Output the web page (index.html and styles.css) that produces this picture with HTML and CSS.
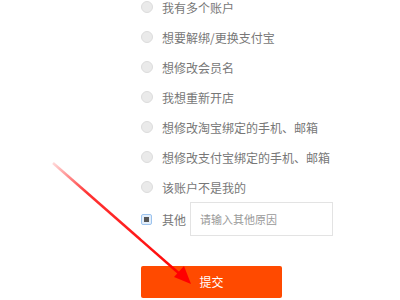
FILE: index.html
```html
<!DOCTYPE html>
<html lang="zh-CN">
<head>
	<meta charset="UTF-8">
	<title>申诉原因</title>
	<link rel="stylesheet" href="styles.css">
</head>
<body>
	<div class="reason">
		<ul class="reason-list">
			<li><span class="radio"></span>我有多个账户</li>
			<li><span class="radio"></span>想要解绑/更换支付宝</li>
			<li><span class="radio"></span>想修改会员名</li>
			<li><span class="radio"></span>我想重新开店</li>
			<li><span class="radio"></span>想修改淘宝绑定的手机、邮箱</li>
			<li><span class="radio"></span>想修改支付宝绑定的手机、邮箱</li>
			<li><span class="radio"></span>该账户不是我的</li>
			<li class="other"><span class="check"></span>其他<input class="other-input" type="text" placeholder="请输入其他原因"></li>
		</ul>
		<a href="#" class="submit">提交</a>
	</div>
	<svg class="arrow" width="400" height="300" viewBox="0 0 400 300">
		<defs>
			<linearGradient id="fade" x1="53" y1="163" x2="190" y2="283" gradientUnits="userSpaceOnUse">
				<stop offset="0" stop-color="#ff0000" stop-opacity="0.15"/>
				<stop offset="0.25" stop-color="#ff0000" stop-opacity="0.8"/>
				<stop offset="1" stop-color="#ff0000"/>
			</linearGradient>
		</defs>
		<line x1="53" y1="163" x2="182" y2="276" stroke="url(#fade)" stroke-width="2.5"/>
		<polygon points="191,284 174,277 184,266" fill="#ff0000"/>
	</svg>
</body>
</html>
```

FILE: styles.css
```css
*{
	margin:0;
	padding:0;
}
body{
	width:400px;
	height:300px;
	overflow:hidden;
	background:#fff;
	font-family:"Noto Sans CJK SC","Liberation Sans",sans-serif;
	font-size:12px;
	color:#777;
}
li{
	list-style:none;
}
.reason{
	padding-left:141px;
}
.reason-list{
	margin-top:-8px;
}
.reason-list li{
	display:flex;
	align-items:center;
	height:30px;
}
.radio{
	width:10px;
	height:10px;
	border:1px solid #dcdcdc;
	border-radius:50%;
	background:#eaeaea;
	margin-right:9px;
}
.reason-list li.other{
	height:34px;
}
.check{
	width:9px;
	height:9px;
	border:1px solid #9cc3ee;
	border-radius:2px;
	background:#e3eefa;
	margin-right:10px;
	position:relative;
}
.check:after{
	content:"";
	position:absolute;
	left:2px;
	top:2px;
	width:5px;
	height:5px;
	background:#555;
}
.other-input{
	width:132px;
	height:32px;
	margin-left:4px;
	padding-left:9px;
	border:1px solid #e3e3e3;
	font-family:"Noto Sans CJK SC","Liberation Sans",sans-serif;
	font-size:11px;
	color:#777;
	outline:none;
}
.other-input::placeholder{
	color:#999;
}
.submit{
	display:block;
	width:141px;
	height:32px;
	line-height:32px;
	margin-top:30px;
	background:#ff4a00;
	color:#fff;
	text-align:center;
	font-size:12px;
	text-decoration:none;
	border-radius:2px;
}
.arrow{
	position:absolute;
	left:0;
	top:0;
}
```
